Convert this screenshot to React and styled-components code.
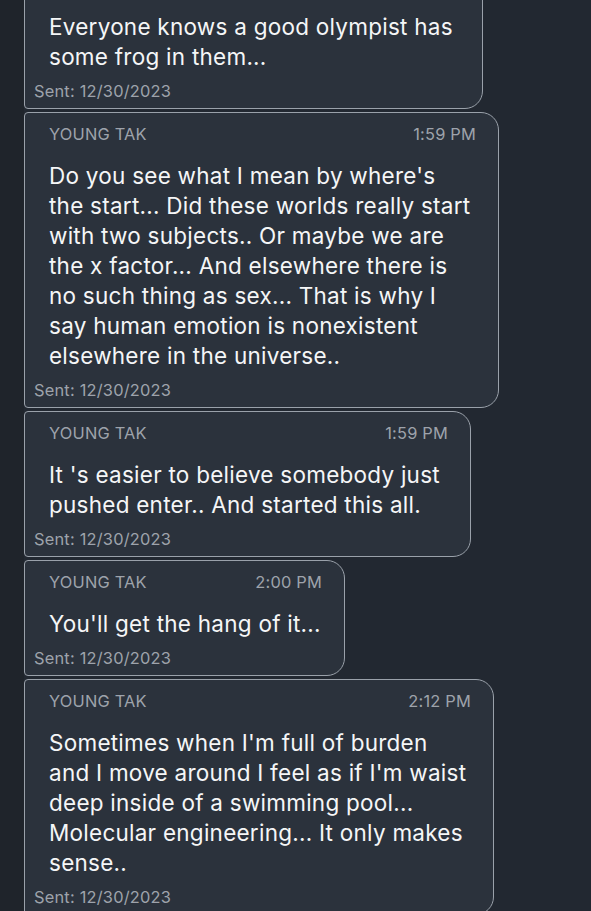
import React from 'react';
import styled, { createGlobalStyle } from 'styled-components';

const GlobalStyle = createGlobalStyle`
  html, body {
    margin: 0;
    padding: 0;
    background: #222831;
  }
  body {
    font-family: Inter, "Noto Sans", "Liberation Sans", sans-serif;
    -webkit-font-smoothing: antialiased;
  }
`;

const Screen = styled.div`
  width: 591px;
  height: 911px;
  overflow: hidden;
  display: flex;
  background: #222831;
`;

const Gutter = styled.div`
  width: 24px;
  flex: none;
  background: #1f242b;
`;

const Thread = styled.div`
  flex: 1;
  display: flex;
  flex-direction: column;
  align-items: flex-start;
  gap: 3px;
  margin-top: -37px;
`;

const Bubble = styled.div`
  box-sizing: border-box;
  width: ${(p) => p.$width}px;
  background: #2b323c;
  border: 1.5px solid #9aa1aa;
  border-radius: 4px 18px 18px 4px;
  padding: 11px 0 7px;
`;

const Header = styled.div`
  display: flex;
  justify-content: space-between;
  padding: 0 22px 0 24px;
  font-size: 16.4px;
  line-height: 20px;
  letter-spacing: 0.2px;
  color: #9ea3ab;
`;

const Sender = styled.span`
  text-transform: uppercase;
`;

const Body = styled.div`
  margin-top: 17px;
  padding: 0 24px;
  font-size: 22.5px;
  line-height: 30px;
  letter-spacing: 0.25px;
  color: #f5f6f7;
`;

const Line = styled.div`
  white-space: nowrap;
`;

const Sent = styled.div`
  margin-top: 9px;
  padding-left: 9px;
  font-size: 16.4px;
  line-height: 20px;
  letter-spacing: 0.2px;
  color: #9ea3ab;
`;

const messages = [
  {
    width: 459,
    time: '1:58 PM',
    lines: ['Everyone knows a good olympist has', 'some frog in them...'],
  },
  {
    width: 475,
    time: '1:59 PM',
    lines: [
      "Do you see what I mean by where's",
      'the start... Did these worlds really start',
      'with two subjects.. Or maybe we are',
      'the x factor... And elsewhere there is',
      'no such thing as sex... That is why I',
      'say human emotion is nonexistent',
      'elsewhere in the universe..',
    ],
  },
  {
    width: 447,
    time: '1:59 PM',
    lines: ["It 's easier to believe somebody just", 'pushed enter.. And started this all.'],
  },
  {
    width: 321,
    time: '2:00 PM',
    lines: ["You'll get the hang of it..."],
  },
  {
    width: 470,
    time: '2:12 PM',
    lines: [
      "Sometimes when I'm full of burden",
      "and I move around I feel as if I'm waist",
      'deep inside of a swimming pool...',
      'Molecular engineering... It only makes',
      'sense..',
    ],
  },
];

export default function App() {
  return (
    <>
      <GlobalStyle />
      <Screen>
        <Gutter />
        <Thread>
          {messages.map((m, i) => (
            <Bubble key={i} $width={m.width}>
              <Header>
                <Sender>Young Tak</Sender>
                <span>{m.time}</span>
              </Header>
              <Body>
                {m.lines.map((l, j) => (
                  <Line key={j}>{l}</Line>
                ))}
              </Body>
              <Sent>Sent: 12/30/2023</Sent>
            </Bubble>
          ))}
        </Thread>
      </Screen>
    </>
  );
}
